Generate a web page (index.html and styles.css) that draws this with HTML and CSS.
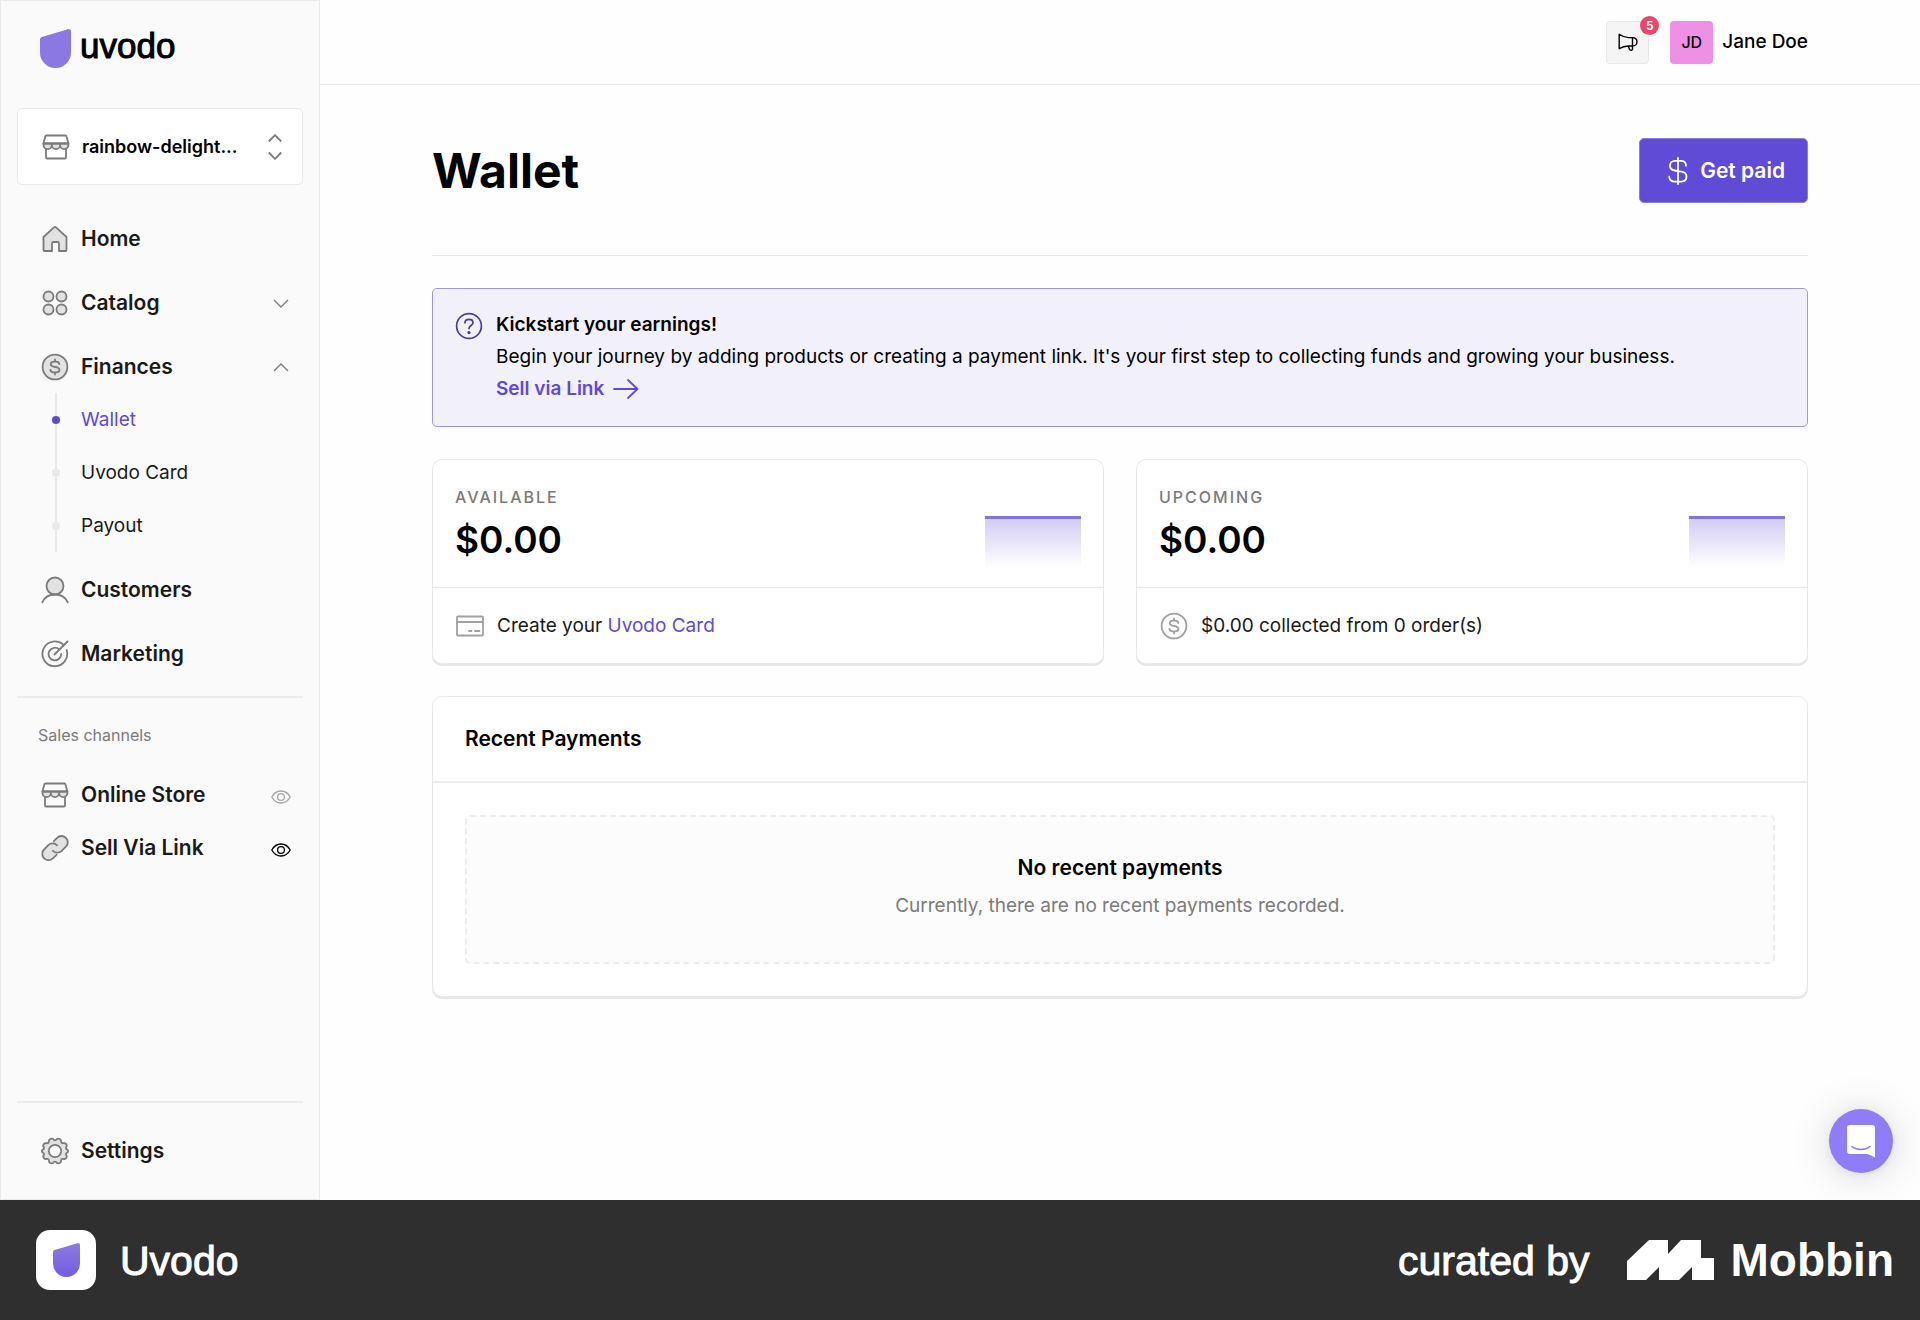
FILE: index.html
```html
<!DOCTYPE html>
<html lang="en">
<head>
    <meta charset="UTF-8">
    <title>Wallet - Uvodo</title>
    <link rel="stylesheet" href="styles.css">
</head>
<body>
<!-- shared icons -->
<svg class="sprite" width="0" height="0">
    <symbol id="i-store" viewBox="0 0 28 28">
        <path d="M4 12v12.5a1 1 0 0 0 1 1h18a1 1 0 0 0 1-1V12" fill="none"/>
        <path class="tint" d="M1.5 10.500v1.500a4.100 4.100 0 0 0 8.300 0a4.100 4.100 0 0 0 8.300 0a4.100 4.100 0 0 0 8.300 0v-1.500z"/>
        <path d="M4.600 2.500h18.800a1 1 0 0 1 1 .8l2 7.200h-25l2-7.200a1 1 0 0 1 1.200-.8z" fill="none"/>
    </symbol>
    <symbol id="i-dollar" viewBox="0 0 28 28">
        <circle class="tint" cx="14" cy="14" r="12.400"/>
        <path fill="none" d="M14 6.500v2.200M14 19.400v2.100M18.300 11c-.3-1.600-1.600-2.300-3.300-2.300h-2c-2 0-3.300 1-3.300 2.600c0 3.900 8.800 1.500 8.800 5.500c0 1.600-1.400 2.600-3.400 2.600h-2.200c-2 0-3.300-.9-3.500-2.500"/>
    </symbol>
    <symbol id="i-eye" viewBox="0 0 20 14">
        <path fill="none" d="M.8 7C3 3 6.200 1 10 1s7 2 9.200 6c-2.200 4-5.400 6-9.200 6S3 11 .8 7z"/>
        <circle fill="none" cx="10" cy="7" r="3.400"/>
    </symbol>
    <symbol id="i-down" viewBox="0 0 16 9"><path fill="none" d="M1 1l7 7l7-7"/></symbol>
    <symbol id="i-up" viewBox="0 0 16 9"><path fill="none" d="M1 8l7-7l7 7"/></symbol>
</svg>

<div class="app">
    <aside class="sidebar">
        <a class="logo" href="#">
            <svg width="31" height="39" viewBox="0 0 31 39"><path fill="#8b78e2" d="M0 10.500a2.500 2.500 0 0 1 1.800-2.400L28 .2a2.400 2.400 0 0 1 3 2.300V23.500a15.500 15.500 0 0 1-31 0z"/></svg>
            <span>uvodo</span>
        </a>

        <button class="store-select" type="button">
            <svg class="icon"><use href="#i-store"/></svg>
            <span>rainbow-delight...</span>
            <svg class="updown" width="14" height="26" viewBox="0 0 14 26" fill="none"><path d="M.8 7.500L7 1.200l6.200 6.300M.8 18.500L7 24.800l6.200-6.300"/></svg>
        </button>

        <nav class="menu">
            <a class="item" href="#">
                <svg class="icon" viewBox="0 0 28 28"><path class="tint" d="M2.500 12L13 2.400a1.500 1.500 0 0 1 2 0L25.500 12v13a1 1 0 0 1-1 1H18v-7.500a1.500 1.500 0 0 0-1.500-1.500h-4a1.500 1.500 0 0 0-1.500 1.500V26H3.500a1 1 0 0 1-1-1z"/></svg>
                Home
            </a>
            <a class="item" href="#">
                <svg class="icon" viewBox="0 0 28 28"><g class="tint"><circle cx="7.500" cy="7.500" r="5"/><circle cx="20.500" cy="7.500" r="5"/><circle cx="7.500" cy="20.500" r="5"/><circle cx="20.500" cy="20.500" r="5"/></g></svg>
                Catalog
                <svg class="chev"><use href="#i-down"/></svg>
            </a>
            <div class="group">
                <a class="item" href="#">
                    <svg class="icon"><use href="#i-dollar"/></svg>
                    Finances
                    <svg class="chev"><use href="#i-up"/></svg>
                </a>
                <ul class="sub">
                    <li class="active"><a href="#">Wallet</a></li>
                    <li><a href="#">Uvodo Card</a></li>
                    <li><a href="#">Payout</a></li>
                </ul>
            </div>
            <a class="item" href="#">
                <svg class="icon" viewBox="0 0 28 28"><circle class="tint" cx="14" cy="10" r="8.500"/><path fill="none" d="M1.300 26.300C3.500 21.500 8.300 18.500 14 18.500s10.500 3 12.700 7.800"/></svg>
                Customers
            </a>
            <a class="item" href="#">
                <svg class="icon" viewBox="0 0 28 28" fill="none"><path d="M22.800 5.300A12.400 12.400 0 1 0 25.600 10M18.200 9.400A6.300 6.300 0 1 0 20.200 14M13.500 14.500L26.500 1.500"/></svg>
                Marketing
            </a>
        </nav>

        <div class="channels">
            <h2>Sales channels</h2>
            <a class="item" href="#">
                <svg class="icon"><use href="#i-store"/></svg>
                Online Store
                <svg class="eye"><use href="#i-eye"/></svg>
            </a>
            <a class="item" href="#">
                <svg class="icon" viewBox="0 0 28 28">
                    <path class="tint" d="M12.800 15.500a6 6 0 0 1-.3-8.200l3.500-3.600a6.200 6.200 0 0 1 8.800 8.800l-4.500 4.500a6.200 6.200 0 0 1-8.800-1z" stroke="none"/>
                    <path class="tint" d="M15.500 12a6.200 6.200 0 0 0-8.500-.8l-4 4.100a6.200 6.200 0 0 0 8.800 8.800l3.500-3.500a6 6 0 0 0 .2-8.600z" stroke="none"/>
                    <path fill="none" d="M12.800 7.200l3.300-3.400a6.200 6.200 0 0 1 8.800 8.800l-4.200 4.200a6.200 6.200 0 0 1-8.800 0M15.600 20.800l-3.700 3.500a6.200 6.200 0 0 1-8.800-8.800l4.200-4.300a6.200 6.200 0 0 1 8.800.2"/>
                </svg>
                Sell Via Link
                <svg class="eye on"><use href="#i-eye"/></svg>
            </a>
        </div>

        <div class="bottom">
            <a class="item" href="#">
                <svg class="icon" viewBox="0 0 28 28"><path class="tint" fill-rule="evenodd" d="M11.800 1.800Q14 4.800 16.200 1.800Q18.600 1 20 3.200Q19.800 6.600 22.600 6.200Q25.300 5.700 25.900 8.900Q23.800 11.600 26.300 12.600Q28 14 26.300 15.600Q23.800 16.600 25.900 19.200Q25.300 22.500 22.400 21.900Q19.700 21.500 20 24.800Q18.600 27 16.200 26.200Q14 23.200 11.800 26.200Q9.400 27 8 24.800Q8.300 21.500 5.600 21.900Q2.700 22.500 2.100 19.200Q4.200 16.600 1.700 15.600Q0 14 1.700 12.600Q4.200 11.600 2.100 8.900Q2.700 5.700 5.400 6.200Q8.200 6.600 8 3.200Q9.400 1 11.800 1.800zM14 7.800a6.200 6.200 0 1 0 0 12.400a6.200 6.200 0 1 0 0-12.400z"/></svg>
                Settings
            </a>
        </div>
    </aside>

    <div class="page">
        <header class="topbar">
            <button class="news" type="button" aria-label="News">
                <svg width="20" height="18" viewBox="0 0 20 18" fill="none" stroke="#000" stroke-width="1.400" stroke-linejoin="round"><path d="M1.200 1.300v14.400c2.800-1.800 5.800-2.700 9.300-2.700h4.300a4.200 4.200 0 0 0 0-8.400h-4.300C7 4.600 4 3.300 1.200 1.300zM10.300 13l1.200 3.300c.5 1.200 2.700 1.300 3 0V4.600"/></svg>
                <span class="badge">5</span>
            </button>
            <a class="user" href="#"><span class="avatar">JD</span>Jane Doe</a>
        </header>

        <main>
            <div class="title-row">
                <h1>Wallet</h1>
                <button class="btn" type="button">
                    <svg width="20" height="28" viewBox="0 0 20 28" fill="none" stroke="#fff" stroke-width="1.800" stroke-linecap="round"><path d="M10 1v26M18 8.800c0-3-2-5-5-5H7c-3 0-5 2-5 5c0 2.800 1.700 4.200 4.500 4.700l7 1.200c3 .5 5 2.100 5 4.900c0 3-2 5-5 5h-7c-3 0-5.300-2-5.300-5"/></svg>
                    Get paid
                </button>
            </div>

            <section class="notice">
                <svg width="28" height="28" viewBox="0 0 28 28" fill="none" stroke="#4c3a9e" stroke-width="1.700" stroke-linecap="round"><circle cx="14" cy="14" r="12.400"/><path d="M10 10.800c0-2.200 1.700-3.500 4-3.500s4 1.300 4 3.400c0 2.800-4 2.900-4 5.800"/><circle cx="14" cy="20.600" r=".8" fill="#4c3a9e"/></svg>
                <div>
                    <h2>Kickstart your earnings!</h2>
                    <p>Begin your journey by adding products or creating a payment link. It's your first step to collecting funds and growing your business.</p>
                    <a href="#">Sell via Link
                        <svg width="26" height="20" viewBox="0 0 26 20" fill="none" stroke="#5f4bd3" stroke-width="1.800" stroke-linecap="round" stroke-linejoin="round"><path d="M1 10h23.500M15 1l9.500 9l-9.500 9"/></svg>
                    </a>
                </div>
            </section>

            <div class="cards">
                <section class="card">
                    <div class="balance">
                        <div>
                            <h3>Available</h3>
                            <p>$0.00</p>
                        </div>
                        <div class="chart"></div>
                    </div>
                    <div class="note">
                        <svg class="icon" viewBox="0 0 28 28" fill="none"><rect x="1" y="4.500" width="26" height="19" rx="1"/><path d="M1 10h26M13 19h2.500M19 19h4.500"/></svg>
                        <p>Create your <a href="#">Uvodo Card</a></p>
                    </div>
                </section>
                <section class="card">
                    <div class="balance">
                        <div>
                            <h3>Upcoming</h3>
                            <p>$0.00</p>
                        </div>
                        <div class="chart"></div>
                    </div>
                    <div class="note">
                        <svg class="icon"><use href="#i-dollar"/></svg>
                        <p>$0.00 collected from 0 order(s)</p>
                    </div>
                </section>
            </div>

            <section class="card payments">
                <h2>Recent Payments</h2>
                <div class="empty">
                    <h3>No recent payments</h3>
                    <p>Currently, there are no recent payments recorded.</p>
                </div>
            </section>
        </main>
    </div>

    <button class="chat" type="button" aria-label="Open chat">
        <svg width="28" height="33" viewBox="0 0 28 33"><path fill="#fff" d="M3 0h22A3 3 0 0 1 28 3V32.500c-2.500-1.500-5-2.500-8-3.500H3A3 3 0 0 1 0 26V3A3 3 0 0 1 3 0z"/><path fill="none" stroke="#8f7cf7" stroke-width="1.600" stroke-linecap="round" d="M5 21.500c5 4 13 4 18 0"/></svg>
    </button>
</div>

<footer class="credit">
    <div class="tile">
        <svg width="27" height="34" viewBox="0 0 31 39"><defs><linearGradient id="g" x2="0" y2="1"><stop stop-color="#8c7ae0"/><stop offset="1" stop-color="#745ce0"/></linearGradient></defs><path fill="url(#g)" d="M0 10.500a2.500 2.500 0 0 1 1.800-2.400L28 .2a2.400 2.400 0 0 1 3 2.300V23.500a15.500 15.500 0 0 1-31 0z"/></svg>
    </div>
    <span class="app-name">Uvodo</span>
    <span class="by">curated by</span>
    <svg width="88" height="40" viewBox="0 0 88 40"><path fill="#fff" d="M0 21L22 0H41V14L54 0H74V18H87V40H65V27L52 40H32V27L19 40H0z"/></svg>
    <strong>Mobbin</strong>
</footer>
</body>
</html>
```
FILE: styles.css
```css
* {
    box-sizing: border-box;
    margin: 0;
    padding: 0;
}

body {
    display: flex;
    flex-direction: column;
    min-height: 100vh;
    font-family: Inter, "Liberation Sans", sans-serif;
    font-size: 19px;
    line-height: 32px;
    color: #000;
    background: #fefefe;
}

a {
    color: inherit;
    text-decoration: none;
}

button {
    font: inherit;
    color: inherit;
    cursor: pointer;
}

ul {
    list-style: none;
}

.sprite {
    position: absolute;
}

.app {
    position: relative;
    flex: 1;
    display: flex;
}

/* sidebar */
.sidebar {
    width: 320px;
    flex: none;
    display: flex;
    flex-direction: column;
    padding: 28px 16px 22px;
    border: 1px solid #e9e9e9;
    background: #fafafa;
}

.logo {
    display: flex;
    align-items: center;
    gap: 9px;
    height: 39px;
    margin: 0 23px 40px;
    font-family: "Liberation Sans", Arial, sans-serif;
    font-size: 35px;
    -webkit-text-stroke: 1px #000;
}

.logo span {
    margin-top: -6px;
}

.icon {
    width: 28px;
    height: 28px;
    flex: none;
    stroke: #7b7b7b;
    stroke-width: 1.8;
    stroke-linejoin: round;
    stroke-linecap: round;
}

.tint {
    fill: var(--tint, #e2e2e2);
}

.store-select {
    display: flex;
    align-items: center;
    gap: 12px;
    height: 77px;
    padding: 0 20px 0 24px;
    border: 1px solid #e9e9e9;
    border-radius: 5px;
    background: #fff;
    font-size: 18px;
    font-weight: 600;
}

.updown {
    margin-left: auto;
    stroke: #7b7b7b;
    stroke-width: 1.8;
}

.menu {
    display: flex;
    flex-direction: column;
    gap: 12px;
    margin-top: 28px;
    padding-bottom: 16px;
    border-bottom: 2px solid #ececec;
}

.item {
    display: flex;
    align-items: center;
    gap: 12px;
    height: 52px;
    padding: 0 14px 0 24px;
    font-size: 21px;
    font-weight: 600;
    color: #1a1a1a;
}

.chev {
    width: 16px;
    height: 9px;
    margin-left: auto;
    stroke: #7b7b7b;
    stroke-width: 1.3;
}

.sub {
    margin-left: 38px;
    border-left: 2px solid #e9e9e9;
}

.sub li {
    display: flex;
    align-items: center;
    height: 53px;
    color: #1a1a1a;
}

.sub li::before {
    content: "";
    width: 8px;
    height: 8px;
    margin: 0 21px 0 -5px;
    border-radius: 50%;
    background: #e9e9e9;
}

.sub .active {
    color: #5f4bd3;
}

.sub .active::before {
    background: #5f4bd3;
}

.channels h2 {
    padding: 21px 21px 18px;
    font-size: 16px;
    font-weight: 400;
    color: #7b7b7b;
}

.channels .item + .item {
    margin-top: 1px;
}

.eye {
    width: 20px;
    height: 14px;
    margin: 3px -2px 0 auto;
    stroke: #a5a5a5;
    stroke-width: 1.3;
}

.eye.on {
    stroke: #000;
}

.bottom {
    margin-top: auto;
    padding-top: 22px;
    border-top: 2px solid #ececec;
}

/* content */
.page {
    flex: 1;
    min-width: 0;
}

.topbar {
    display: flex;
    align-items: center;
    justify-content: flex-end;
    gap: 21px;
    height: 85px;
    padding: 0 112px;
    border-bottom: 1px solid #e9e9e9;
}

.news {
    position: relative;
    display: flex;
    align-items: center;
    justify-content: center;
    width: 43px;
    height: 43px;
    border: 1px solid #e9e9e9;
    border-radius: 4px;
    background: #f5f5f5;
}

.badge {
    position: absolute;
    top: -6px;
    right: -11px;
    width: 19px;
    height: 19px;
    border-radius: 50%;
    background: #e5486b;
    color: #fff;
    font-size: 12px;
    font-weight: 600;
    line-height: 19px;
    text-align: center;
}

.user {
    display: flex;
    align-items: center;
    gap: 9px;
    font-weight: 500;
}

.avatar {
    width: 43px;
    height: 43px;
    border-radius: 4px;
    background: #ee90e3;
    font-size: 16px;
    line-height: 43px;
    text-align: center;
}

main {
    padding: 53px 112px;
}

.title-row {
    display: flex;
    align-items: center;
    justify-content: space-between;
    padding-bottom: 52px;
    border-bottom: 1px solid #e9e9e9;
}

h1 {
    font-size: 48px;
    line-height: 64px;
}

.btn {
    display: flex;
    align-items: center;
    gap: 12px;
    height: 65px;
    padding: 0 22px 0 28px;
    border: 1px solid #8c7de0;
    border-radius: 5px;
    background: #5f4bd5;
    color: #fff;
    font-size: 21px;
    font-weight: 600;
}

.notice {
    display: flex;
    gap: 13px;
    margin-top: 32px;
    padding: 20px 22px 21px;
    border: 1px solid #a195dd;
    border-radius: 5px;
    background: #f2f0fb;
}

.notice > svg {
    flex: none;
    margin-top: 3px;
}

.notice h2 {
    font-size: 19px;
    font-weight: 600;
}

.notice a {
    display: inline-flex;
    align-items: center;
    gap: 9px;
    height: 32px;
    font-weight: 600;
    color: #5f4bd3;
}

.cards {
    display: grid;
    grid-template-columns: 1fr 1fr;
    gap: 32px;
    margin: 32px 0;
}

.card {
    border: 1px solid #e9e9e9;
    border-radius: 10px;
    background: #fff;
    box-shadow: 0 2px 0 #e6e6e6;
}

.balance {
    display: flex;
    align-items: flex-end;
    justify-content: space-between;
    padding: 21px 22px;
    border-bottom: 1px solid #e9e9e9;
}

.balance h3 {
    font-size: 16px;
    font-weight: 500;
    letter-spacing: 2px;
    text-transform: uppercase;
    color: #7b7b7b;
}

.balance p {
    font-size: 37px;
    font-weight: 600;
    line-height: 53px;
}

.chart {
    width: 96px;
    height: 50px;
    border-top: 3px solid #8472db;
    background: linear-gradient(#d2ccf3, #fefefe);
}

.note {
    --tint: none;
    display: flex;
    align-items: center;
    gap: 13px;
    height: 75px;
    padding: 0 23px;
    color: #1a1a1a;
}

.note .icon {
    stroke: #a0a0a0;
}

.note a {
    color: #5f4bd3;
}

.payments h2 {
    padding: 26px 32px;
    border-bottom: 2px solid #ececec;
    font-size: 21px;
    font-weight: 600;
}

.empty {
    margin: 32px;
    padding: 35px 36px 40px;
    border: 2px dashed #ececec;
    border-radius: 5px;
    background: #fcfcfc;
    text-align: center;
}

.empty h3 {
    font-size: 21px;
    font-weight: 600;
}

.empty p {
    margin-top: 6px;
    color: #7b7b7b;
}

.chat {
    position: absolute;
    right: 27px;
    bottom: 27px;
    display: flex;
    align-items: center;
    justify-content: center;
    width: 64px;
    height: 64px;
    border: 0;
    border-radius: 50%;
    background: #8f7cf7;
    box-shadow: 0 2px 8px rgba(0, 0, 0, .06), 0 3px 42px rgba(0, 0, 0, .16);
}

/* footer bar */
.credit {
    position: relative;
    display: flex;
    align-items: center;
    padding: 30px 26px 30px 36px;
    background: #2f2f2f;
    color: #fff;
    font-family: "Liberation Sans", Arial, sans-serif;
    font-size: 41px;
    line-height: 60px;
}

.tile {
    display: flex;
    align-items: center;
    justify-content: center;
    width: 60px;
    height: 60px;
    margin-right: 24px;
    border-radius: 14px;
    background: #fff;
}

.app-name,
.by {
    height: 60px;
    line-height: 63px;
    -webkit-text-stroke: 1px #fff;
}

.by {
    margin-left: auto;
    margin-right: 37px;
}

.credit strong {
    margin-left: 16px;
    font-size: 46px;
}
```
